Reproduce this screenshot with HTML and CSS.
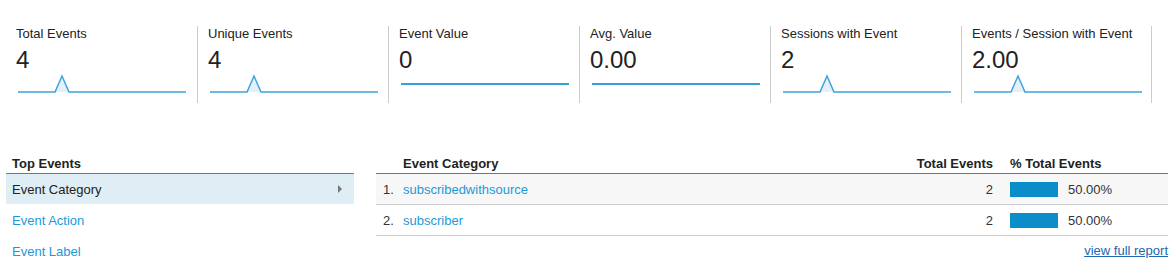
FILE: index.html
```html
<!DOCTYPE html>
<html lang="en">
<head>
    <meta charset="UTF-8">
    <meta name="viewport" content="width=device-width, initial-scale=1.0">
    <title>Top Events</title>
    <link rel="stylesheet" href="styles.css">
</head>
<body>
    <div class="metrics">
        <div class="metric">
            <div class="metric-label">Total Events</div>
            <div class="metric-value">4</div>
            <svg class="spark" width="168" height="20" viewBox="0 0 168 20">
                <polygon class="spark-fill" points="37,18 44,2 51,18"/>
                <polyline class="spark-line" points="0,18 37,18 44,2 51,18 168,18"/>
            </svg>
        </div>
        <div class="metric">
            <div class="metric-label">Unique Events</div>
            <div class="metric-value">4</div>
            <svg class="spark" width="168" height="20" viewBox="0 0 168 20">
                <polygon class="spark-fill" points="37,18 44,2 51,18"/>
                <polyline class="spark-line" points="0,18 37,18 44,2 51,18 168,18"/>
            </svg>
        </div>
        <div class="metric">
            <div class="metric-label">Event Value</div>
            <div class="metric-value">0</div>
            <svg class="spark" width="168" height="20" viewBox="0 0 168 20">
                <line class="spark-flat" x1="0" y1="10" x2="169" y2="10"/>
            </svg>
        </div>
        <div class="metric">
            <div class="metric-label">Avg. Value</div>
            <div class="metric-value">0.00</div>
            <svg class="spark" width="168" height="20" viewBox="0 0 168 20">
                <line class="spark-flat" x1="0" y1="10" x2="169" y2="10"/>
            </svg>
        </div>
        <div class="metric">
            <div class="metric-label">Sessions with Event</div>
            <div class="metric-value">2</div>
            <svg class="spark" width="168" height="20" viewBox="0 0 168 20">
                <polygon class="spark-fill" points="37,18 44,2 51,18"/>
                <polyline class="spark-line" points="0,18 37,18 44,2 51,18 168,18"/>
            </svg>
        </div>
        <div class="metric last">
            <div class="metric-label">Events / Session with Event</div>
            <div class="metric-value">2.00</div>
            <svg class="spark" width="168" height="20" viewBox="0 0 168 20">
                <polygon class="spark-fill" points="37,18 44,2 51,18"/>
                <polyline class="spark-line" points="0,18 37,18 44,2 51,18 168,18"/>
            </svg>
        </div>
    </div>

    <div class="report">
        <div class="dims">
            <div class="dims-head">Top Events</div>
            <div class="dim selected">
                <span>Event Category</span>
                <span class="arrow"></span>
            </div>
            <div class="dim"><a href="#">Event Action</a></div>
            <div class="dim"><a href="#">Event Label</a></div>
        </div>

        <div class="table-wrap">
            <div class="table">
                <div class="th"></div>
                <div class="th">Event Category</div>
                <div class="th num">Total Events</div>
                <div class="th pct">% Total Events</div>

                <div class="td idx odd">1.</div>
                <div class="td odd"><a href="#">subscribedwithsource</a></div>
                <div class="td num odd">2</div>
                <div class="td pct odd"><span class="bar" style="width: 48px;"></span>50.00%</div>

                <div class="td idx">2.</div>
                <div class="td"><a href="#">subscriber</a></div>
                <div class="td num">2</div>
                <div class="td pct"><span class="bar" style="width: 48px;"></span>50.00%</div>
            </div>
            <div class="full-report"><a href="#">view full report</a></div>
        </div>
    </div>
</body>
</html>
```

FILE: styles.css
```css
body {
    margin: 0;
    font-family: "Liberation Sans", Arial, sans-serif;
    font-size: 13px;
    color: #222;
    background: #fff;
}
a {
    color: #1e98d6;
    text-decoration: none;
}

/* metric tiles */
.metrics {
    display: flex;
    padding: 26px 0 0 6px;
}
.metric {
    box-sizing: border-box;
    width: 191px;
    height: 77px;
    padding-left: 10px;
}
.metric + .metric {
    border-left: 1px solid #ccc;
}
.metric.last {
    border-right: 1px solid #ccc;
}
.metric-label {
    line-height: 15px;
    color: #222;
}
.metric-value {
    margin-top: 5px;
    font-size: 24px;
    line-height: 28px;
    color: #222;
}
.spark {
    display: block;
    margin-left: 2px;
}
.spark-line {
    fill: none;
    stroke: #3ea2da;
    stroke-width: 1.5;
}
.spark-fill {
    fill: #e4f1fa;
}
.spark-flat {
    stroke: #3aa0d8;
    stroke-width: 2;
}

/* report */
.report {
    display: flex;
    gap: 22px;
    margin-top: 53px;
    padding-left: 6px;
}
.dims {
    width: 348px;
}
.dims-head,
.th {
    font-weight: bold;
    line-height: 15px;
    padding-bottom: 2px;
    border-bottom: 1px solid #777;
    color: #222;
}
.dims-head {
    padding-left: 6px;
}
.dim {
    display: flex;
    align-items: center;
    justify-content: space-between;
    height: 30px;
    padding: 0 12px 0 6px;
    border-bottom: 1px solid #fff;
}
.dim.selected {
    background: #dfedf5;
    color: #222;
}
.arrow {
    width: 0;
    height: 0;
    border-top: 4px solid transparent;
    border-bottom: 4px solid transparent;
    border-left: 4px solid #777;
}

.table-wrap {
    width: 792px;
}
.table {
    display: grid;
    grid-template-columns: 27px 1fr auto 168px;
}
.td {
    display: flex;
    align-items: center;
    height: 30px;
    border-bottom: 1px solid #ccc;
    color: #333;
}
.td.odd {
    background: #f7f7f7;
}
.idx {
    padding-left: 7px;
}
.num {
    justify-content: flex-end;
    text-align: right;
    padding-right: 7px;
}
.pct {
    padding-left: 10px;
}
.bar {
    display: inline-block;
    height: 15px;
    margin-right: 10px;
    background: #0a8dc8;
}
.full-report {
    margin-top: 7px;
    line-height: 15px;
    text-align: right;
}
.full-report a {
    color: #2266b0;
    text-decoration: underline;
}
```
